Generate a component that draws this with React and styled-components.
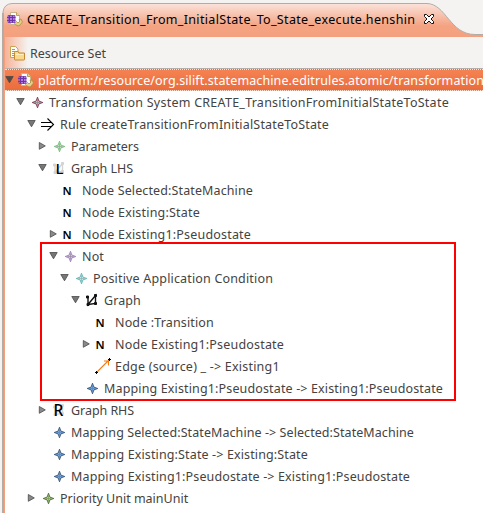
import React from "react";
import styled, { createGlobalStyle } from "styled-components";

const Global = createGlobalStyle`
  * { box-sizing: border-box; }
  body { margin: 0; background: #f4f3f1; overflow: hidden; }
`;

const View = styled.main`
  position: relative;
  width: 483px;
  height: 513px;
  overflow: hidden;
  display: flex;
  flex-direction: column;
  background: #f4f3f1;
  color: #444342;
  font: 12.5px/22px "Noto Sans", sans-serif;
`;

const TabBar = styled.header`
  position: relative;
  flex: none;
  display: flex;
  align-items: flex-start;
  height: 37px;
  padding: 8px 0 0 7px;
  color: #000;
`;

const TabShape = styled.svg`
  position: absolute;
  inset: 0;
`;

const TabContent = styled.div`
  position: relative;
  display: flex;
  align-items: center;
  height: 22px;
`;

const TabTitle = styled.span`
  margin-left: 4px;
  padding-top: 1px;
  letter-spacing: 0.33px;
  white-space: nowrap;
`;

const CloseIcon = styled.svg`
  margin-left: 9px;
  flex: none;
`;

const Pane = styled.section`
  flex: 1;
  min-height: 0;
  display: flex;
  flex-direction: column;
  margin-left: 2px;
  border-left: 2px solid #b3aca6;
  box-shadow: inset 1px 0 #f4a07e;
  padding-left: 1px;
`;

const Toolbar = styled.div`
  flex: none;
  display: flex;
  align-items: center;
  gap: 5px;
  height: 32px;
  padding: 0 0 0 4px;
  border-bottom: 1px solid #b5b0ab;
  background: linear-gradient(90deg, #f8b297 0, #f4f3f1 23px);
`;

const Tree = styled.div`
  flex: 1;
  display: flex;
  flex-direction: column;
  background: #fff;
`;

const Row = styled.div`
  flex: none;
  display: flex;
  align-items: center;
  height: 22px;
  padding-left: ${(p) => p.$level * 11}px;
`;

const SelectedRow = styled(Row)`
  color: #fff;
  background: linear-gradient(#f58252, #ea6c3c);
  border: 1px dotted #fbe0d4;
  border-width: 1px 0;
`;

const Arrow = styled.svg`
  flex: none;
  width: 9px;
  height: 10px;
`;

const IconSlot = styled.span`
  flex: none;
  display: flex;
  align-items: center;
  justify-content: center;
  width: 16px;
  height: 16px;
  margin: 0 ${(p) => 4 - (p.$shift || 0)}px 0 ${(p) => 4 + (p.$shift || 0)}px;
`;

const Label = styled.span`
  padding-top: 2px;
  white-space: nowrap;
  letter-spacing: ${(p) => p.$spacing}px;
`;

const Highlight = styled.div`
  position: absolute;
  left: 40px;
  top: 242px;
  width: 416px;
  height: 159px;
  border: 2px solid #f00;
  pointer-events: none;
`;

const Icon = styled.svg.attrs({ width: 16, height: 16, viewBox: "0 0 16 16" })`
  flex: none;
  overflow: visible;
`;

const FileIcon = () => (
  <Icon>
    <path d="M3.500 1.500h6l3 3v9h-9z" fill="#fdfdff" stroke="#c9b48c" />
    <path d="M9.500 1.500v3h3" fill="#e9d39a" stroke="#c0a050" />
    <path d="M1 4.500h7v7H1z" fill="#b57be0" />
    <path d="M2.500 4v8M5.500 4v8M0 6.500h8.500M0 9.500h8.500" stroke="#6a34a2" />
    <path d="M1 4.500h7v7H1z" fill="none" stroke="#7a3cae" strokeWidth=".8" />
    <path d="M7.500 12.500l2-2 1.500 1.500 2-2-1-1.500 2-.5 1.500 3-3.500 4-2-.5-1.500-1z" fill="#e8d08a" stroke="#a88d3c" strokeWidth=".8" />
  </Icon>
);

const FolderIcon = () => (
  <Icon>
    <path d="M1.500 1.500h5l2.500 2.500v8.500h-7.500z" fill="#fffdf5" stroke="#c9a350" />
    <path d="M3 4.500h3M3 6.500h4M3 8.500h2M3 10.500h2" stroke="#8a9cbc" />
    <path d="M5.500 7.500q0-1 1-1h2.500l1 1.500h5.500v6.500q0 .5-.5.5h-9q-.5 0-.5-.5z" fill="#fbd98b" stroke="#c48a33" />
    <path d="M6.500 9.500h8" stroke="#fff0be" />
  </Icon>
);

const STAR_COLORS = {
  maroon: ["#7d3050", "#c9c4c4", "#666"],
  green: ["#72bd78", "#d0dccf", "#6d8f6e"],
  purple: ["#a37bc4", "#d6cbe0", "#77658a"],
  teal: ["#5bb4b4", "#d0e4e4", "#6f9090"],
  blue: ["#3a5674", "#7fabe0", "#3e73b1"],
  lime: ["#4f6541", "#b4d98a", "#5c7a44"],
};

const Star = ({ tone }) => {
  const [edge, fill, core] = STAR_COLORS[tone];
  return (
    <Icon>
      <path d="M8.500 3.200l1.400 3.900 3.900 1.400-3.900 1.400-1.400 3.900-1.400-3.900-3.900-1.400 3.900-1.400z" fill={fill} stroke={edge} strokeWidth=".9" />
      <path d="M8.500 5.500v6M5.500 8.500h6" stroke={core} strokeWidth=".8" opacity=".6" />
    </Icon>
  );
};

const RuleIcon = () => (
  <Icon fill="none" stroke="#000" strokeWidth="1.100">
    <path d="M1 6.500h11M1 10.500h11M7.500 2.500l6 6-6 6" />
  </Icon>
);

const NetLines = ({ color }) => (
  <g stroke={color} fill={color}>
    <path d="M4 5V12.500L11.500 3.500V11.500L4 12.500" fill="none" strokeWidth="1.400" />
    <path d="M2.500 4h2v2h-2zM10.500 2.500h2v2h-2zM3 11.500h2v2h-2zM10.500 10.500h2v2h-2z" />
  </g>
);

const Glyph = styled.text`
  font: ${(p) => p.$weight} ${(p) => p.$size}px "Noto Sans", sans-serif;
  fill: #000;
`;

const LhsIcon = () => (
  <Icon>
    <NetLines color="#d4d4d4" />
    <Glyph x="4.500" y="14" $weight={500} $size={15}>L</Glyph>
  </Icon>
);

const RhsIcon = () => (
  <Icon>
    <NetLines color="#dadada" />
    <Glyph x="2.500" y="13.500" $weight={500} $size={15.5}>R</Glyph>
  </Icon>
);

const GraphIcon = () => (
  <Icon>
    <NetLines color="#111" />
  </Icon>
);

const NodeIcon = () => (
  <Icon>
    <Glyph x="3.500" y="13" $weight={600} $size={11.5}>N</Glyph>
  </Icon>
);

const EdgeIcon = () => (
  <Icon>
    <path d="M2 14L14 2M9 3h4.500v4.500" fill="none" stroke="#f57c14" strokeWidth="1.100" />
    <path d="M0 14.500h3M1.500 13v3M13 1.500h3M14.500 0v3" stroke="#000" />
  </Icon>
);

const Twisty = ({ state, light }) => (
  <Arrow viewBox="0 0 9 10">
    {state === "open" && <path d="M.8 1.500h7.400L4.500 7.800z" fill={light ? "#59483f" : "#777"} stroke="#4a4a4a" strokeWidth=".8" />}
    {state === "closed" && <path d="M1.300 1.500v6.800L7.300 4.900z" fill="#8a8a8a" stroke="#4a4a4a" strokeWidth=".8" />}
  </Arrow>
);

const star = (tone) => <Star tone={tone} />;

const ROWS = [
  { level: 1, state: "open", icon: star("maroon"), spacing: 0.25, text: "Transformation System CREATE_TransitionFromInitialStateToState" },
  { level: 2, state: "open", icon: <RuleIcon />, spacing: 0.18, text: "Rule createTransitionFromInitialStateToState" },
  { level: 3, state: "closed", icon: star("green"), spacing: 0, text: "Parameters" },
  { level: 3, state: "open", icon: <LhsIcon />, spacing: -0.04, text: "Graph LHS" },
  { level: 4, icon: <NodeIcon />, shift: -3, spacing: 0.12, text: "Node Selected:StateMachine" },
  { level: 4, icon: <NodeIcon />, shift: -3, spacing: 0.19, text: "Node Existing:State" },
  { level: 4, state: "closed", icon: <NodeIcon />, shift: -3, spacing: 0.19, text: "Node Existing1:Pseudostate" },
  { level: 4, state: "open", icon: star("purple"), spacing: 0.14, text: "Not" },
  { level: 5, state: "open", icon: star("teal"), spacing: 0.17, text: "Positive Application Condition" },
  { level: 6, state: "open", icon: <GraphIcon />, spacing: 0.1, text: "Graph" },
  { level: 7, icon: <NodeIcon />, shift: -3, spacing: 0.14, text: "Node :Transition" },
  { level: 7, state: "closed", icon: <NodeIcon />, shift: -3, spacing: 0.19, text: "Node Existing1:Pseudostate" },
  { level: 7, icon: <EdgeIcon />, spacing: 0.21, text: "Edge (source) _ -> Existing1" },
  { level: 6, icon: star("blue"), spacing: 0.14, text: "Mapping Existing1:Pseudostate -> Existing1:Pseudostate" },
  { level: 3, state: "closed", icon: <RhsIcon />, spacing: -0.05, text: "Graph RHS" },
  { level: 3, icon: star("blue"), spacing: 0.075, text: "Mapping Selected:StateMachine -> Selected:StateMachine" },
  { level: 3, icon: star("blue"), spacing: 0.13, text: "Mapping Existing:State -> Existing:State" },
  { level: 3, icon: star("blue"), spacing: 0.14, text: "Mapping Existing1:Pseudostate -> Existing1:Pseudostate" },
  { level: 2, state: "closed", icon: star("lime"), spacing: 0.0, text: "Priority Unit mainUnit" },
];

export default function App() {
  return (
    <>
      <Global />
      <View>
        <TabBar>
          <TabShape width="483" height="37" viewBox="0 0 483 37">
            <defs>
              <linearGradient id="tab" x1="0" y1="0" x2="0" y2="1">
                <stop offset="0" stopColor="#fbe3da" />
                <stop offset=".65" stopColor="#f4a483" />
                <stop offset="1" stopColor="#f4a07e" />
              </linearGradient>
            </defs>
            <path d="M3 37V12Q4 4 12 3.500H427C446 4 450 34.500 475 34.500H483V37z" fill="url(#tab)" />
            <path d="M3 37V12Q4 4 12 3.500H427C446 4 450 34.500 475 34.500H483" fill="none" stroke="#b3aca6" />
            <path d="M3 37V13" stroke="#b3aca6" strokeWidth="2" />
          </TabShape>
          <TabContent>
            <FileIcon />
            <TabTitle>CREATE_Transition_From_InitialState_To_State_execute.henshin</TabTitle>
            <CloseIcon width="10" height="10" viewBox="0 0 10 10">
              <path d="M.5.500h2l2.500 2.500 2.500-2.500h2v2l-2.500 2.500 2.500 2.500v2h-2l-2.500-2.500-2.500 2.500h-2v-2l2.500-2.500-2.500-2.500z" fill="#fff" stroke="#111" />
            </CloseIcon>
          </TabContent>
        </TabBar>
        <Pane>
          <Toolbar>
            <FolderIcon />
            <Label $spacing={0.02}>Resource Set</Label>
          </Toolbar>
          <Tree>
            <SelectedRow $level={0}>
              <Twisty state="open" light />
              <IconSlot>
                <FileIcon />
              </IconSlot>
              <Label $spacing={0.11}>platform:/resource/org.silift.statemachine.editrules.atomic/transformation</Label>
            </SelectedRow>
            {ROWS.map((row, i) => (
              <Row key={i} $level={row.level}>
                <Twisty state={row.state} />
                <IconSlot $shift={row.shift}>{row.icon}</IconSlot>
                <Label $spacing={row.spacing}>{row.text}</Label>
              </Row>
            ))}
          </Tree>
        </Pane>
        <Highlight />
      </View>
    </>
  );
}
